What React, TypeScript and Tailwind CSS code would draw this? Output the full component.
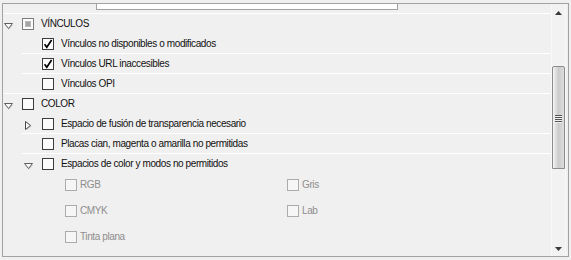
import type { ReactNode } from 'react';

type CheckState = 'on' | 'off' | 'mixed';

type Child = {
  label: string;
  state?: CheckState;
  toggle?: 'right' | 'down';
  sub?: string[][];
};

type Group = { title: string; state: CheckState; children: Child[] };

const GROUPS: Group[] = [
  {
    title: 'VÍNCULOS',
    state: 'mixed',
    children: [
      { label: 'Vínculos no disponibles o modificados', state: 'on' },
      { label: 'Vínculos URL inaccesibles', state: 'on' },
      { label: 'Vínculos OPI' },
    ],
  },
  {
    title: 'COLOR',
    state: 'off',
    children: [
      { label: 'Espacio de fusión de transparencia necesario', toggle: 'right' },
      { label: 'Placas cian, magenta o amarilla no permitidas' },
      {
        label: 'Espacios de color y modos no permitidos',
        toggle: 'down',
        sub: [['RGB', 'Gris'], ['CMYK', 'Lab'], ['Tinta plana']],
      },
    ],
  },
];

function Check({ state = 'off', disabled }: { state?: CheckState; disabled?: boolean }) {
  if (disabled) {
    return <span className="block w-[12px] h-[12px] shrink-0 border border-[#acacac] bg-[#f6f6f6]" />;
  }
  return (
    <span
      className={`flex items-center justify-center w-[12px] h-[12px] shrink-0 border bg-[#fcfcfc] ${
        state === 'mixed' ? 'border-[#7c7c7c]' : 'border-[#3c3c3c]'
      }`}
    >
      {state === 'mixed' && <span className="block w-[6px] h-[6px] bg-[#a4a4a4] border border-[#b8b8b8]" />}
      {state === 'on' && (
        <svg width="10" height="10" viewBox="0 0 10 10">
          <path d="M1.6 5.2 L3.8 8.2 L8.6 1" fill="none" stroke="#000" strokeWidth="1.7" />
        </svg>
      )}
    </span>
  );
}

function Tri({ dir }: { dir: 'right' | 'down' }) {
  if (dir === 'down') {
    return (
      <svg width="10" height="8" viewBox="0 0 10 8" className="block">
        <polygon points="1,2 9,2 5,7" fill="#d0d0d0" />
        <polygon points="0.5,0.5 8.5,0.5 4.5,5.5" fill="#fafafa" stroke="#5e5e5e" strokeWidth="1" />
      </svg>
    );
  }
  return (
    <svg width="8" height="10" viewBox="0 0 8 10" className="block">
      <polygon points="2,1 2,9 7,5" fill="#d0d0d0" />
      <polygon points="0.5,0.5 0.5,8.5 5.5,4.5" fill="#fafafa" stroke="#4a4a4a" strokeWidth="1" />
    </svg>
  );
}

function Label({ children }: { children: ReactNode }) {
  return <span className="ml-[7px] leading-[20px] text-[#111] whitespace-nowrap">{children}</span>;
}

function ChildRow({ item, last }: { item: Child; last: boolean }) {
  return (
    <>
      <div
        className={`ml-[19px] flex items-start ${
          last && !item.sub ? 'h-[19px]' : item.sub ? 'h-[20px]' : 'h-[20px] border-b border-white'
        }`}
      >
        <span className="w-[20px] h-[19px] flex items-start">
          {item.toggle === 'right' && (
            <span className="ml-[3px] mt-[7px]">
              <Tri dir="right" />
            </span>
          )}
          {item.toggle === 'down' && (
            <span className="ml-[2px] mt-[9px]">
              <Tri dir="down" />
            </span>
          )}
        </span>
        <span className="mt-[4px]">
          <Check state={item.state} />
        </span>
        <Label>{item.label}</Label>
      </div>
      {item.sub && (
        <div className="ml-[62px] grid grid-cols-[222px_1fr]">
          {item.sub.flatMap((row, r) =>
            [0, 1].map((c) => (
              <div key={`${r}-${c}`} className="h-[26px] pt-[5px] flex items-start">
                {row[c] && (
                  <>
                    <Check disabled />
                    <span className="ml-[3px] -mt-[4px] leading-[20px] text-[#8e8e8e]">{row[c]}</span>
                  </>
                )}
              </div>
            ))
          )}
        </div>
      )}
    </>
  );
}

function Scrollbar() {
  return (
    <div className="ml-[1px] w-[15px] flex flex-col bg-[#f2f2f2] border-l border-r border-[#f8f8f8]">
      <div className="h-[62px] flex justify-center pt-[7px]">
        <svg width="7" height="4" viewBox="0 0 7 4" className="block">
          <polygon points="3.5,0 7,4 0,4" fill="#3a3a3a" />
        </svg>
      </div>
      <div className="h-[103px] rounded-t-[2px] border border-[#8c8c8c] bg-gradient-to-r from-[#f4f4f4] via-[#cbcbcb] to-[#dedede] flex flex-col items-center justify-center gap-[1px] pt-[2px]">
        {[0, 1, 2, 3].map((i) => (
          <span key={i} className="block w-[7px] h-[1px] bg-[#555] shadow-[0_1px_0_#eee]" />
        ))}
      </div>
      <div className="flex-1 flex items-end justify-center pb-[5px]">
        <svg width="7" height="4" viewBox="0 0 7 4" className="block">
          <polygon points="0,0 7,0 3.5,4" fill="#3a3a3a" />
        </svg>
      </div>
    </div>
  );
}

export default function App() {
  return (
    <div className="relative w-[571px] h-[260px] bg-[#f0f0f0] pt-[3px] pl-[2px] font-['Liberation_Sans',Arial,sans-serif] text-[10px] tracking-[-0.4px]">
      <div className="w-[567px] h-[254px] border border-[#a2a2a2] flex">
        <div className="w-[547px] pt-[9px]">
          {GROUPS.map((g) => (
            <div key={g.title} className="border-t border-white">
              <div className="h-[20px] flex items-start">
                <span className="w-[19px] h-[20px] flex items-start">
                  <span className="ml-[1px] mt-[9px]">
                    <Tri dir="down" />
                  </span>
                </span>
                <span className="mt-[4px]">
                  <Check state={g.state} />
                </span>
                <Label>{g.title}</Label>
              </div>
              {g.children.map((c, i) => (
                <ChildRow key={c.label} item={c} last={i === g.children.length - 1} />
              ))}
            </div>
          ))}
        </div>
        <Scrollbar />
      </div>
      <div className="absolute left-[96px] top-[3px] w-[302px] h-[7px] border border-[#a2a2a2] bg-white" />
    </div>
  );
}
